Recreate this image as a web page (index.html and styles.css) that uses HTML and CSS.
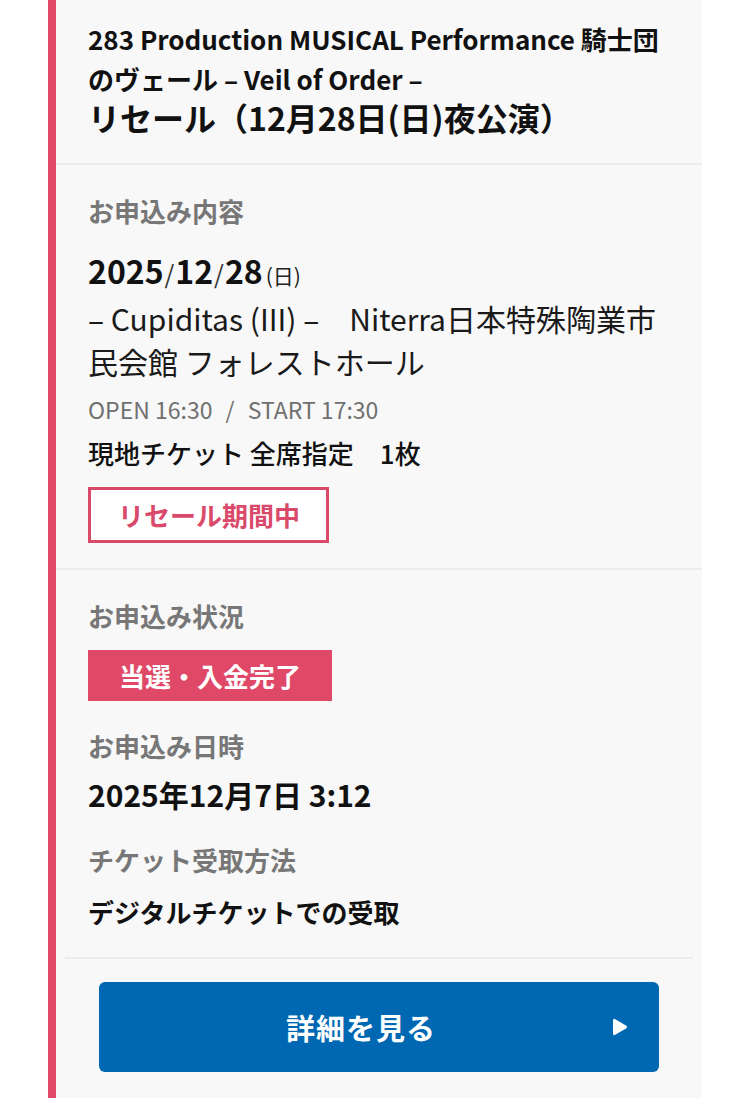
FILE: index.html
```html
<!DOCTYPE html>
<html lang="ja">
<head>
<meta charset="utf-8">
<link rel="stylesheet" href="styles.css">
</head>
<body>
<div class="card">
  <div class="head">
    <div class="title">283 Production MUSICAL Performance 騎士団のヴェール – Veil of Order –</div>
    <div class="subtitle">リセール（12月28日(日)夜公演）</div>
  </div>
  <div class="section">
    <div class="label">お申込み内容</div>
    <div class="date"><span class="num">2025</span><span class="sl">/</span><span class="num">12</span><span class="sl">/</span><span class="num">28</span><span class="dow">(日)</span></div>
    <div class="venue">– Cupiditas (III) –　Niterra日本特殊陶業市民会館 フォレストホール</div>
    <div class="time">OPEN 16:30 <span class="tsl">/</span> START 17:30</div>
    <div class="ticket">現地チケット 全席指定　1枚</div>
    <div class="badge-outline">リセール期間中</div>
  </div>
  <div class="section last">
    <div class="label">お申込み状況</div>
    <div class="badge-fill">当選・入金完了</div>
    <div class="label mt">お申込み日時</div>
    <div class="value big">2025年12月7日 3:12</div>
    <div class="label mt2">チケット受取方法</div>
    <div class="value">デジタルチケットでの受取</div>
  </div>
  <div class="foot">
    <a class="btn" href="#"><span class="btn-text">詳細を見る</span><svg class="arrow" width="16" height="18" viewBox="0 0 16 18"><path d="M3.2 1.2 Q1 0 1 2.6 V15.4 Q1 18 3.2 16.8 L14 10.6 Q16 9 14 7.4 Z" fill="#fff"/></svg></a>
  </div>
</div>
</body>
</html>
```

FILE: styles.css
```css
html, body {
  margin: 0;
  padding: 0;
  background: #ffffff;
}
body {
  font-family: "Noto Sans CJK JP", "Noto Sans", sans-serif;
  color: #111;
}
.card {
  margin-left: 48px;
  width: 654px;
  border-left: 8px solid #e04868;
  background: #f8f8f8;
  min-height: 1098px;
  box-sizing: border-box;
}
.head {
  padding: 19px 32px 25px 32px;
  border-bottom: 2px solid #ececec;
}
.title {
  font-size: 26px;
  font-weight: 700;
  line-height: 40px;
}
.subtitle {
  margin-top: -3px;
  font-size: 32px;
  font-weight: 700;
  line-height: 42px;
}
.section {
  padding: 30px 32px 25px 32px;
  border-bottom: 2px solid #ececec;
}
.section.last {
  border-bottom: none;
  padding-bottom: 29px;
}
.label {
  font-size: 26px;
  font-weight: 700;
  line-height: 32px;
  color: #777;
}
.label.mt { margin-top: 29px; }
.label.mt2 { margin-top: 31px; }
.date {
  margin-top: 21px;
  line-height: 44px;
  height: 44px;
}
.date .num {
  font-size: 32px;
  font-weight: 700;
}
.date .sl {
  font-size: 25px;
  font-weight: 400;
  color: #333;
  margin: 0 1px;
}
.date .dow {
  font-size: 21px;
  font-weight: 400;
  color: #222;
  margin-left: 3px;
}
.venue {
  margin-top: 5px;
  font-size: 30px;
  line-height: 43px;
  font-weight: 400;
  color: #1a1a1a;
}
.time {
  margin-top: 11px;
  font-size: 23px;
  line-height: 30px;
  color: #707070;
}
.tsl {
  margin: 0 8px;
}
.ticket {
  margin-top: 13px;
  font-size: 26px;
  line-height: 32px;
  font-weight: 500;
  color: #111;
}
.badge-outline {
  display: inline-block;
  margin-top: 18px;
  border: 3px solid #d94a6a;
  color: #d94a6a;
  font-size: 26px;
  font-weight: 700;
  line-height: 50px;
  height: 50px;
  padding: 0 26px 0 27px;
  background: #fff;
}
.badge-fill {
  display: inline-block;
  margin-top: 18px;
  background: #e04868;
  color: #fff;
  font-size: 26px;
  font-weight: 700;
  line-height: 51px;
  height: 51px;
  padding: 0 31px;
}
.value {
  margin-top: 20px;
  font-size: 26px;
  font-weight: 700;
  line-height: 32px;
}
.value.big {
  margin-top: 13px;
  font-size: 30px;
  line-height: 38px;
}
.foot {
  margin: 0 9px;
  border-top: 2px solid #ececec;
  padding: 23px 0 0 0;
  display: flex;
  justify-content: center;
}
.btn {
  display: flex;
  align-items: center;
  justify-content: center;
  position: relative;
  width: 560px;
  height: 90px;
  background: #0068b2;
  border-radius: 6px;
  color: #fff;
  text-decoration: none;
}
.btn-text {
  font-size: 29px;
  font-weight: 700;
  letter-spacing: 1px;
  margin-right: 36px;
}
.arrow {
  position: absolute;
  right: 31px;
  top: 36px;
}
```
